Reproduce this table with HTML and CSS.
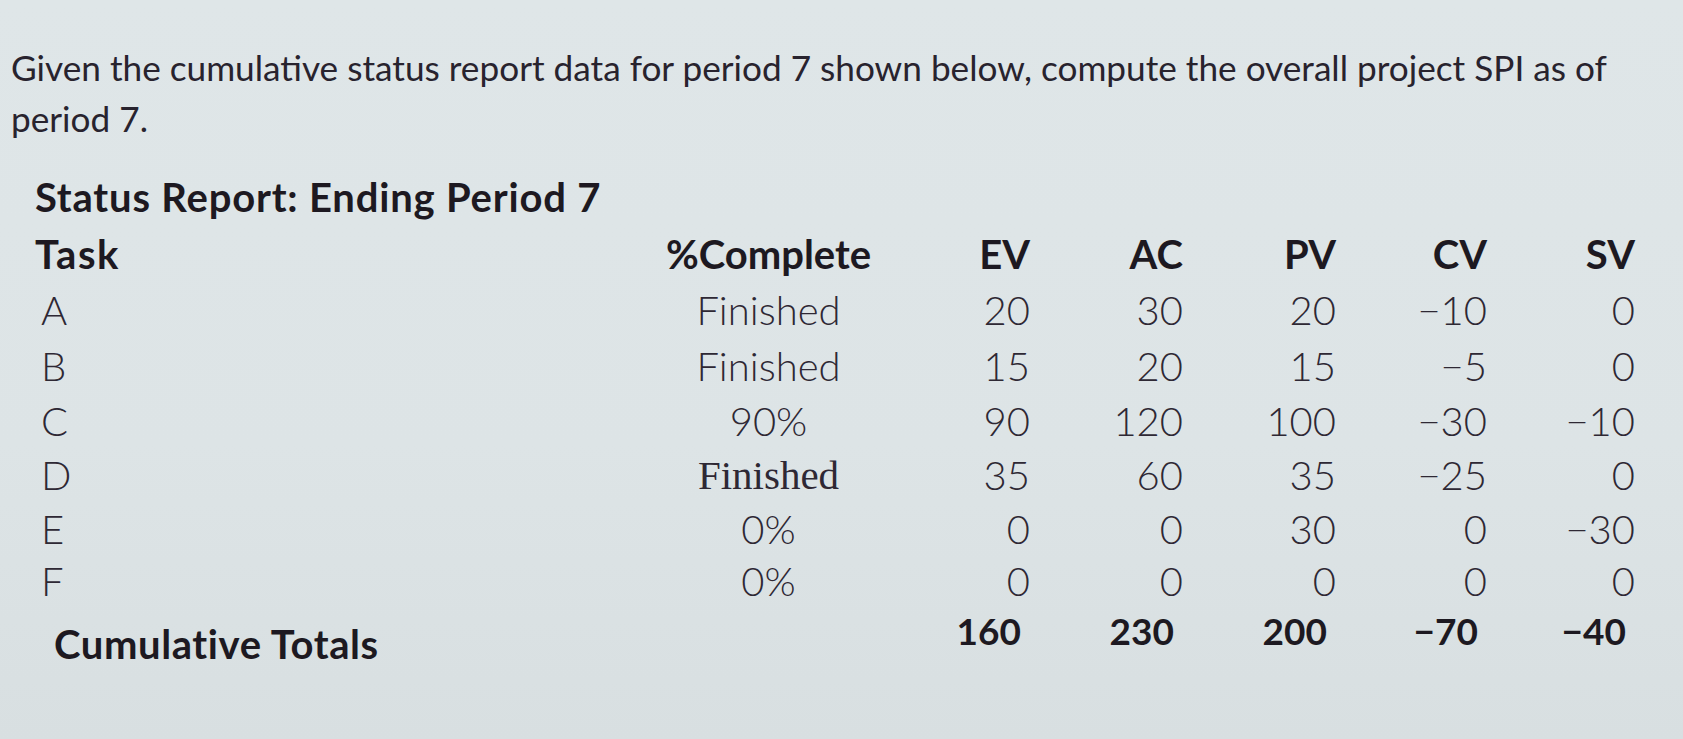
FILE: index.html
```html
<!DOCTYPE html>
<html lang="en">
<head>
<meta charset="utf-8">
<title>Status Report</title>
<link rel="stylesheet" href="styles.css">
</head>
<body>
<main class="page">
  <p class="question">Given the cumulative status report data for period 7 shown below, compute the overall project SPI as of<br>period 7.</p>
  <section class="report">
    <h2 class="report-title">Status Report: Ending Period 7</h2>
    <div class="grid">
      <div class="hd task">Task</div>
      <div class="hd pct">%Complete</div>
      <div class="hd num">EV</div>
      <div class="hd num">AC</div>
      <div class="hd num">PV</div>
      <div class="hd num">CV</div>
      <div class="hd num">SV</div>

      <div class="cell task">A</div>
      <div class="cell pct">Finished</div>
      <div class="cell num">20</div>
      <div class="cell num">30</div>
      <div class="cell num">20</div>
      <div class="cell num">−10</div>
      <div class="cell num">0</div>

      <div class="cell task">B</div>
      <div class="cell pct">Finished</div>
      <div class="cell num">15</div>
      <div class="cell num">20</div>
      <div class="cell num">15</div>
      <div class="cell num">−5</div>
      <div class="cell num">0</div>

      <div class="cell task">C</div>
      <div class="cell pct">90%</div>
      <div class="cell num">90</div>
      <div class="cell num">120</div>
      <div class="cell num">100</div>
      <div class="cell num">−30</div>
      <div class="cell num">−10</div>

      <div class="cell task">D</div>
      <div class="cell pct serif">Finished</div>
      <div class="cell num">35</div>
      <div class="cell num">60</div>
      <div class="cell num">35</div>
      <div class="cell num">−25</div>
      <div class="cell num">0</div>

      <div class="cell task">E</div>
      <div class="cell pct">0%</div>
      <div class="cell num">0</div>
      <div class="cell num">0</div>
      <div class="cell num">30</div>
      <div class="cell num">0</div>
      <div class="cell num">−30</div>

      <div class="cell task">F</div>
      <div class="cell pct">0%</div>
      <div class="cell num">0</div>
      <div class="cell num">0</div>
      <div class="cell num">0</div>
      <div class="cell num">0</div>
      <div class="cell num">0</div>

      <div class="tot label">Cumulative Totals</div>
      <div class="tot pct"></div>
      <div class="tot num">160</div>
      <div class="tot num">230</div>
      <div class="tot num">200</div>
      <div class="tot num">−70</div>
      <div class="tot num">−40</div>
    </div>
  </section>
</main>
</body>
</html>
```

FILE: styles.css
```css
html, body {
  margin: 0;
  padding: 0;
}

body {
  width: 1683px;
  height: 739px;
  overflow: hidden;
  background: linear-gradient(180deg, #dfe6e8 0%, #dde4e6 60%, #d8dfe1 100%);
  color: #2a2530;
  font-family: "Lato", "Liberation Sans", sans-serif;
}

.page {
  padding: 42px 0 0 11px;
}

.question {
  margin: 0;
  font-size: 35.2px;
  line-height: 51px;
  color: #28232e;
}

.report {
  margin-top: 25px;
  padding-left: 24px;
}

.report-title {
  margin: 0;
  font-size: 40px;
  font-weight: 700;
  letter-spacing: 0.8px;
  line-height: 56px;
  color: #1d1921;
}

.grid {
  display: grid;
  grid-template-columns: 627px 213px 155px 153px 153px 151px 148px;
  grid-template-rows: 56px 56px 56px 55px 54px 54px 52px 48px;
  align-items: end;
  font-size: 40px;
  line-height: 54px;
}

.hd {
  font-weight: 700;
  color: #1d1921;
}

.hd.task {
  letter-spacing: 1.5px;
}

.cell {
  font-weight: 300;
  color: #2e2834;
}

.cell.task {
  padding-left: 6px;
}

.pct {
  text-align: center;
}

.serif {
  font-family: "Liberation Serif", serif;
  font-size: 41px;
  font-weight: 400;
}

.num {
  text-align: right;
}

.tot {
  font-weight: 700;
  color: #1d1921;
  line-height: 50px;
}

.tot.num {
  font-size: 37px;
  padding-right: 9px;
}

.tot.label {
  padding-left: 19px;
  letter-spacing: 0.6px;
  transform: translateY(13px);
}
```
